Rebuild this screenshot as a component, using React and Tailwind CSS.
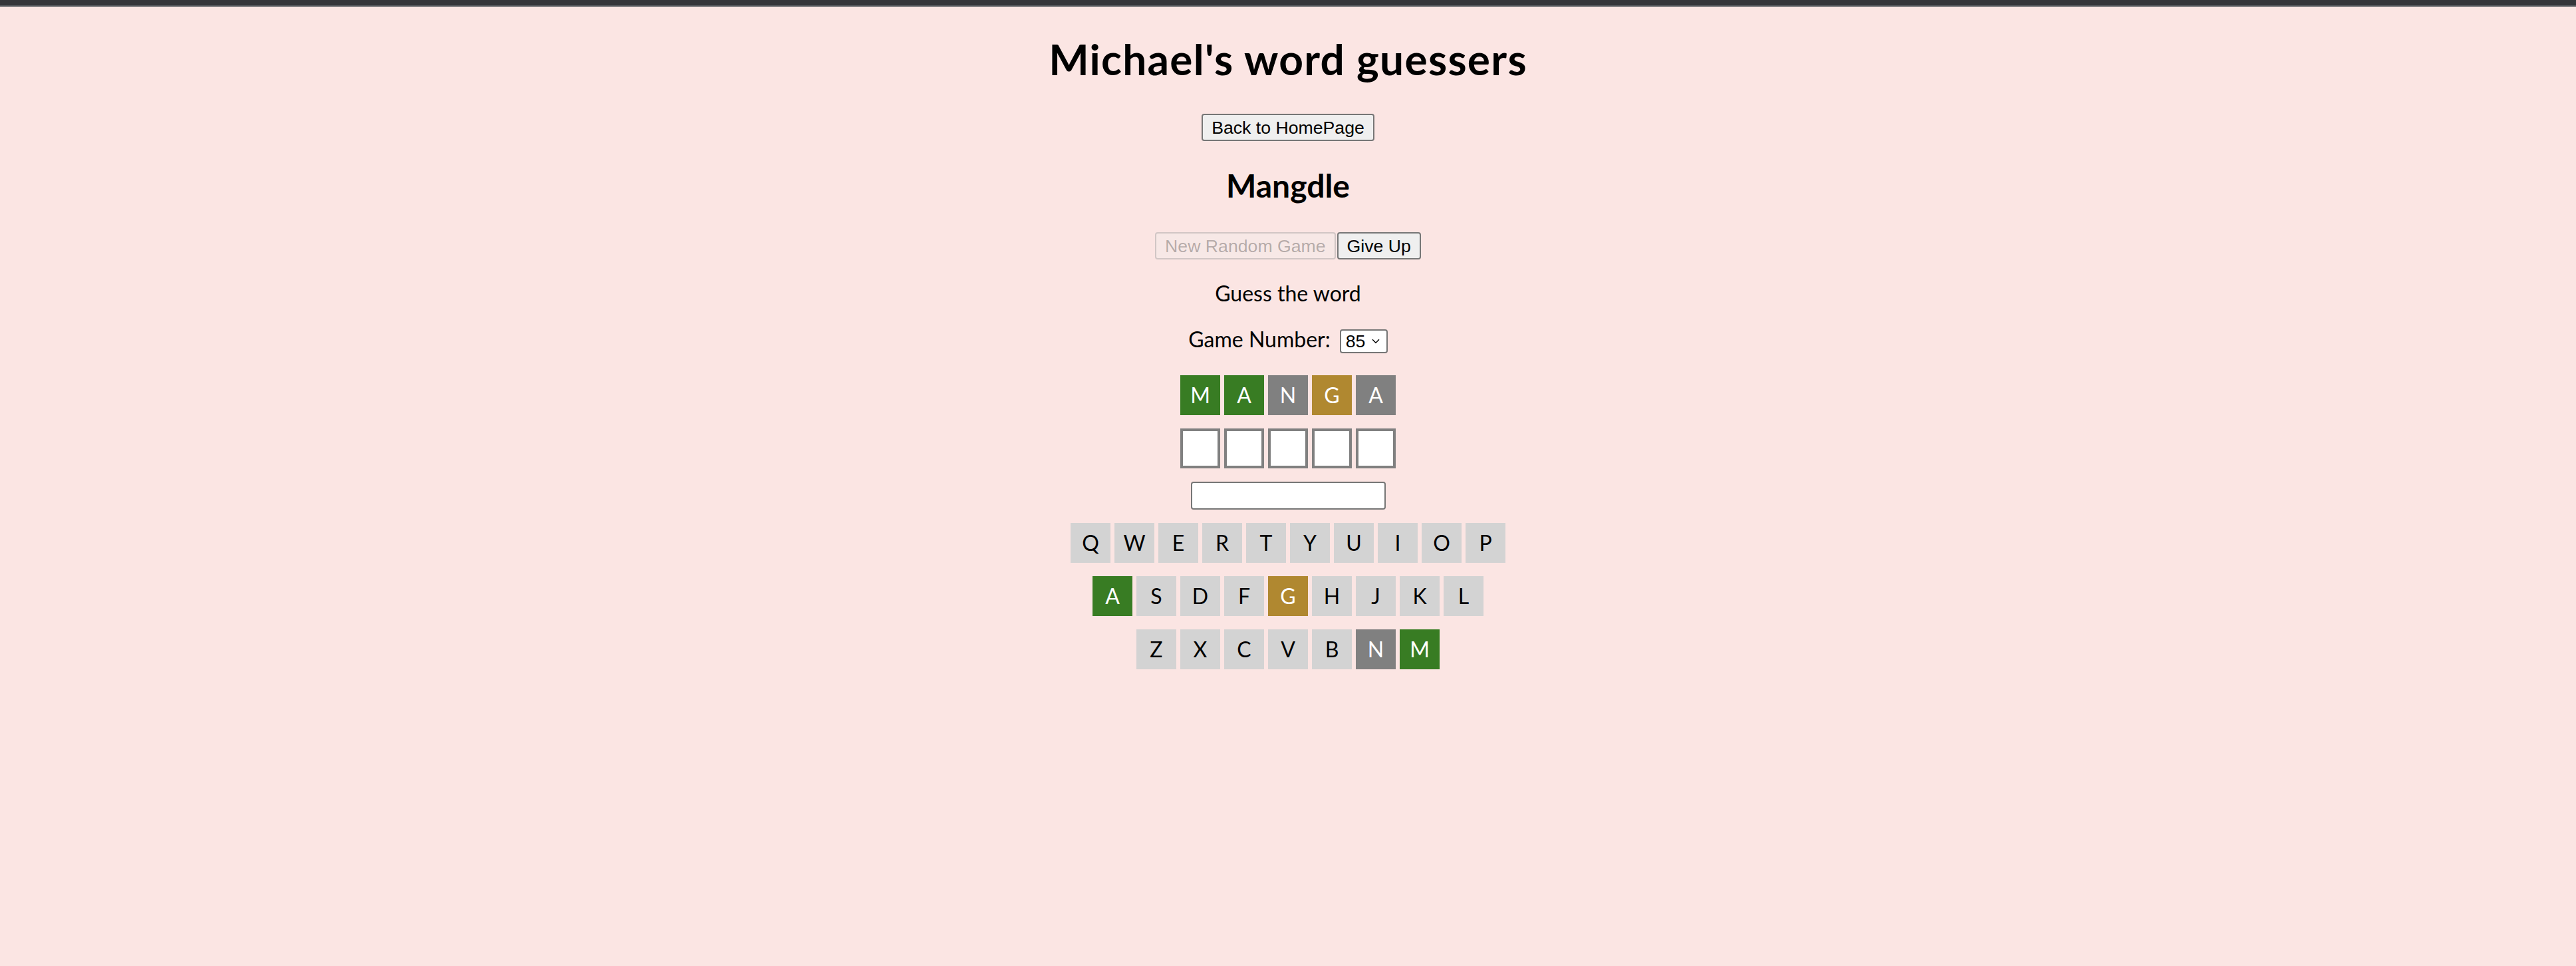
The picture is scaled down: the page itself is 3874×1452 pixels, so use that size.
import React from "react";

const GREEN = "bg-[#387c23] text-white";
const YELLOW = "bg-[#b08830] text-white";
const GRAY = "bg-[#808080] text-white";
const KEY = "bg-[#d3d3d3] text-black";

const guess = [
  { l: "M", c: GREEN },
  { l: "A", c: GREEN },
  { l: "N", c: GRAY },
  { l: "G", c: YELLOW },
  { l: "A", c: GRAY },
];

const keyColors = { A: GREEN, G: YELLOW, N: GRAY, M: GREEN };
const rows = ["QWERTYUIOP", "ASDFGHJKL", "ZXCVBNM"];

function Tile({ letter, cls }) {
  return (
    <div className={`flex h-[60px] w-[60px] items-center justify-center text-[32px] leading-[60px] ${cls}`}>
      {letter}
    </div>
  );
}

export default function App() {
  const btn =
    "h-[41px] rounded-[4px] border-2 border-[#767676] bg-[#efefef] px-[13px] text-[26.67px] leading-[30px] text-black font-['Liberation_Sans',Arial,sans-serif]";
  return (
    <div className="min-h-screen bg-[#fbe5e3] text-black font-['Lato','Open_Sans',sans-serif]">
      <div className="h-[8px] bg-[#35363a]" />
      <div className="h-[2px] bg-[#5a5d62]" />
      <div className="flex flex-col items-center">
        <h1 className="mt-[42px] text-[64px] font-bold leading-[74px] tracking-[1.3px]">Michael's word guessers</h1>
        <button className={`mt-[45px] ${btn}`}>Back to HomePage</button>
        <h2 className="mt-[39px] text-[48px] font-bold leading-[56px]">Mangdle</h2>
        <div className="mt-[42px] flex gap-[2px]">
          <button
            disabled
            className="h-[41px] rounded-[4px] border-2 border-[rgba(118,118,118,0.3)] bg-[rgba(239,239,239,0.3)] px-[13px] text-[26.67px] leading-[30px] text-[rgba(16,16,16,0.3)] font-['Liberation_Sans',Arial,sans-serif]"
          >
            New Random Game
          </button>
          <button className={btn}>Give Up</button>
        </div>
        <p className="mt-[32px] text-[32px] leading-[38px]">Guess the word</p>
        <div className="mt-[31px] flex items-start gap-[14px]">
          <span className="text-[32px] leading-[38px]">Game Number:</span>
          <div className="mt-[4px] flex h-[36px] w-[72px] items-center rounded-[4px] border-2 border-[#767676] bg-white pl-[7px] pr-[10px] font-['Liberation_Sans',Arial,sans-serif] text-[26.67px] leading-[30px]">
            <span className="flex-1">85</span>
            <svg width="12" height="8" viewBox="0 0 12 8" fill="none" stroke="#000" strokeWidth="1.4">
              <path d="M1 1.2 L6 6.2 L11 1.2" />
            </svg>
          </div>
        </div>
        <div className="mt-[33px] flex flex-col gap-[20px]">
          <div className="flex gap-[6px]">
            {guess.map((g, i) => (
              <Tile key={i} letter={g.l} cls={g.c} />
            ))}
          </div>
          <div className="flex gap-[6px]">
            {[0, 1, 2, 3, 4].map((i) => (
              <div key={i} className="h-[60px] w-[60px] border-4 border-[#808080] bg-white" />
            ))}
          </div>
        </div>
        <input
          type="text"
          className="mt-[20px] h-[42px] w-[293px] rounded-[4px] border-2 border-[#767676] bg-white outline-none"
        />
        <div className="mt-[20px] flex flex-col items-center gap-[20px]">
          {rows.map((r) => (
            <div key={r} className="flex gap-[6px]">
              {r.split("").map((ch) => (
                <Tile key={ch} letter={ch} cls={keyColors[ch] || KEY} />
              ))}
            </div>
          ))}
        </div>
      </div>
    </div>
  );
}
